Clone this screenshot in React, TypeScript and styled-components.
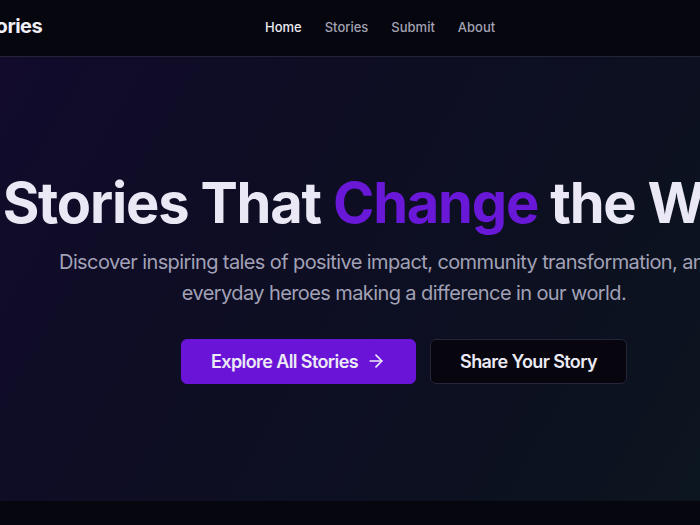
import * as React from 'react'
import styled, { createGlobalStyle } from 'styled-components'
import { ArrowRight, Sparkles } from 'lucide-react'

const GlobalStyle = createGlobalStyle`
  html, body {
    margin: 0;
    padding: 0;
    background: #06060f;
    overflow: hidden;
  }
  body {
    font-family: 'Inter', 'Noto Sans', sans-serif;
    -webkit-font-smoothing: antialiased;
  }
  * {
    box-sizing: border-box;
  }
`

// the shot is a wide page seen through a narrow window, scrolled a bit to the right
const Page = styled.div`
  width: 1100px;
  margin-left: -146px;
  min-height: 525px;
  background: #06060f;
`

const NavBar = styled.header`
  height: 57px;
  background: #06060f;
  border-bottom: 1px solid #23233a;
`

const NavInner = styled.nav`
  height: 56px;
  padding: 0 32px 4px;
  display: flex;
  align-items: center;
  justify-content: space-between;
`

const Logo = styled.a`
  display: flex;
  align-items: center;
  gap: 8px;
  color: #f1f0f7;
  font-size: 20px;
  font-weight: 700;
  letter-spacing: -0.5px;
  text-decoration: none;
`

const LogoMark = styled.span`
  width: 28px;
  height: 28px;
  border-radius: 6px;
  background: #6d16d9;
  display: flex;
  align-items: center;
  justify-content: center;
  color: #fff;
`

const NavLinks = styled.ul`
  display: flex;
  gap: 23px;
  margin: 0;
  padding: 0;
  list-style: none;
`

const NavLink = styled.a<{ active?: boolean }>`
  font-size: 13px;
  font-weight: 500;
  color: ${(props) => (props.active ? '#ecebf5' : '#a3a3b3')};
  text-decoration: none;
`

const NavActions = styled.div`
  width: 204px;
  display: flex;
  justify-content: flex-end;
`

const SignIn = styled.a`
  font-size: 13px;
  font-weight: 500;
  color: #ecebf5;
`

const Hero = styled.section`
  height: 444px;
  display: flex;
  flex-direction: column;
  align-items: center;
  justify-content: center;
  text-align: center;
  background: linear-gradient(120deg, #140a30 0%, #0e0d24 35%, #0c1120 65%, #0c1b1f 100%);
`

const Title = styled.h1`
  margin: 0;
  font-size: 56px;
  line-height: 56px;
  font-weight: 700;
  letter-spacing: -1.2px;
  color: #e9e8f4;
  white-space: nowrap;
`

const Accent = styled.span`
  color: #6a18d8;
`

const Lead = styled.p`
  margin: 16px 0 0;
  max-width: 704px;
  font-size: 20px;
  line-height: 31px;
  letter-spacing: -0.6px;
  color: #a2a1b6;
`

const Actions = styled.div`
  margin-top: 30px;
  display: flex;
  gap: 14px;
`

const Button = styled.a<{ primary?: boolean }>`
  height: 45px;
  padding: 0 29px;
  display: flex;
  align-items: center;
  gap: 8px;
  border-radius: 6px;
  font-size: 18px;
  font-weight: 600;
  letter-spacing: -0.6px;
  color: #ecebf5;
  text-decoration: none;
  background: ${(props) => (props.primary ? '#6a14d7' : '#07060f')};
  border: 1px solid ${(props) => (props.primary ? '#6a14d7' : '#26253a')};
`

export default function App() {
  return (
    <Page>
      <GlobalStyle />
      <NavBar>
        <NavInner>
          <Logo href="#">
            <LogoMark>
              <Sparkles size={16} />
            </LogoMark>
            Good Stories
          </Logo>
          <NavLinks>
            <li><NavLink active href="#">Home</NavLink></li>
            <li><NavLink href="#">Stories</NavLink></li>
            <li><NavLink href="#">Submit</NavLink></li>
            <li><NavLink href="#">About</NavLink></li>
          </NavLinks>
          <NavActions>
            <SignIn href="#">Sign in</SignIn>
          </NavActions>
        </NavInner>
      </NavBar>
      <Hero>
        <Title>
          Stories That <Accent>Change</Accent> the World
        </Title>
        <Lead>
          Discover inspiring tales of positive impact, community transformation, and the
          everyday heroes making a difference in our world.
        </Lead>
        <Actions>
          <Button primary href="#">
            Explore All Stories
            <ArrowRight size={20} strokeWidth={2} />
          </Button>
          <Button href="#">Share Your Story</Button>
        </Actions>
      </Hero>
    </Page>
  )
}
